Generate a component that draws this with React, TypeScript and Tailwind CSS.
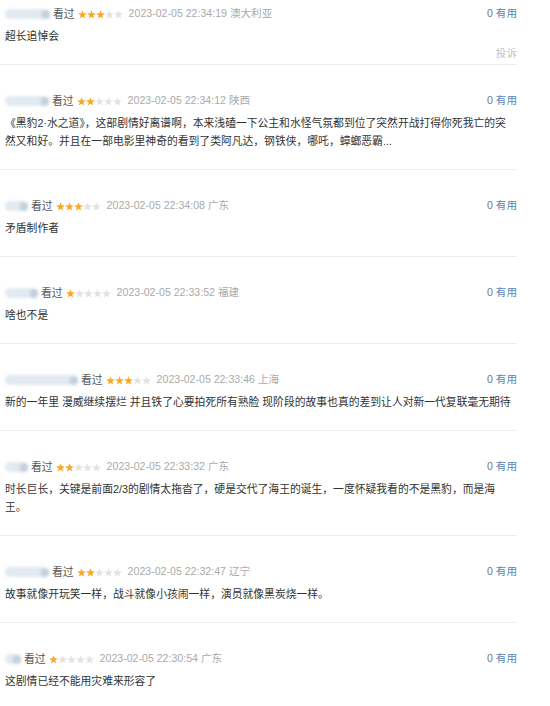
import React from "react";

interface Comment {
  nameW: number;
  rating: number;
  time: string;
  loc: string;
  text: string;
}

const comments: Comment[] = [
  { nameW: 45, rating: 3, time: "2023-02-05 22:34:19", loc: "澳大利亚", text: "超长追悼会" },
  {
    nameW: 44,
    rating: 2,
    time: "2023-02-05 22:34:12",
    loc: "陕西",
    text: "《黑豹2·水之道》，这部剧情好离谱啊，本来浅磕一下公主和水怪气氛都到位了突然开战打得你死我亡的突然又和好。并且在一部电影里神奇的看到了类阿凡达，钢铁侠，哪吒，蟑螂恶霸...",
  },
  { nameW: 23, rating: 3, time: "2023-02-05 22:34:08", loc: "广东", text: "矛盾制作者" },
  { nameW: 33, rating: 1, time: "2023-02-05 22:33:52", loc: "福建", text: "啥也不是" },
  {
    nameW: 73,
    rating: 3,
    time: "2023-02-05 22:33:46",
    loc: "上海",
    text: "新的一年里 漫威继续摆烂 并且铁了心要拍死所有熟脸 现阶段的故事也真的差到让人对新一代复联毫无期待",
  },
  {
    nameW: 23,
    rating: 2,
    time: "2023-02-05 22:33:32",
    loc: "广东",
    text: "时长巨长，关键是前面2/3的剧情太拖沓了，硬是交代了海王的诞生，一度怀疑我看的不是黑豹，而是海王。",
  },
  {
    nameW: 44,
    rating: 2,
    time: "2023-02-05 22:32:47",
    loc: "辽宁",
    text: "故事就像开玩笑一样，战斗就像小孩闹一样，演员就像黑炭烧一样。",
  },
  { nameW: 16, rating: 1, time: "2023-02-05 22:30:54", loc: "广东", text: "这剧情已经不能用灾难来形容了" },
];

const STAR = "4.5,0.2 5.62,3.26 8.87,3.38 6.31,5.39 7.2,8.52 4.5,6.7 1.8,8.52 2.69,5.39 0.13,3.38 3.38,3.26";

const Stars = ({ n }: { n: number }) => (
  <svg width="45" height="9" viewBox="0 0 45 9" className="block">
    {[0, 1, 2, 3, 4].map((i) => (
      <polygon key={i} transform={`translate(${i * 9} 0)`} points={STAR} fill={i < n ? "#f9a825" : "#e2e2e2"} />
    ))}
  </svg>
);

// blurred user name, like in the screenshot
const Blob = ({ w }: { w: number }) => (
  <span className="relative block h-[12px] shrink-0" style={{ width: w }}>
    <span className="absolute inset-y-[1px] left-0 right-[3px] rounded-full bg-[#e2e9f0] blur-[1.5px]"></span>
    <span className="absolute top-[2px] bottom-[1px] right-0 w-[8px] rounded-full bg-[#c3d0dd] blur-[1.5px]"></span>
  </span>
);

export default function App() {
  return (
    <div className="w-[517px] bg-white font-['Liberation_Sans','Noto_Sans_CJK_SC',sans-serif] text-[#333]">
      {comments.map((c, idx) => (
        <div key={idx} className={`border-b border-[#ececec] ${idx === 0 ? "pt-[4px]" : "pt-[26px]"}`}>
          <div className="flex items-center h-[20px] pl-[5px] text-[10.6px]">
            <div className="flex items-center flex-1 min-w-0 whitespace-nowrap">
              <Blob w={c.nameW} />
              <span className="ml-[3px] text-[10.8px] text-[#555]">看过</span>
              <span className="ml-[3px]">
                <Stars n={c.rating} />
              </span>
              <span className="ml-[6px] text-[#aaa]">
                {c.time} {c.loc}
              </span>
            </div>
            <span className="text-[#777]">
              0 <span className="text-[#5b86b5]">有用</span>
            </span>
          </div>
          <p className="mt-[3px] pl-[5px] pr-[3px] text-[10.8px] leading-[18px]">{c.text}</p>
          <div className="h-[19px] flex justify-end text-[10.6px] leading-[16px] text-[#c4c4c4]">
            {idx === 0 && <span>投诉</span>}
          </div>
        </div>
      ))}
    </div>
  );
}
